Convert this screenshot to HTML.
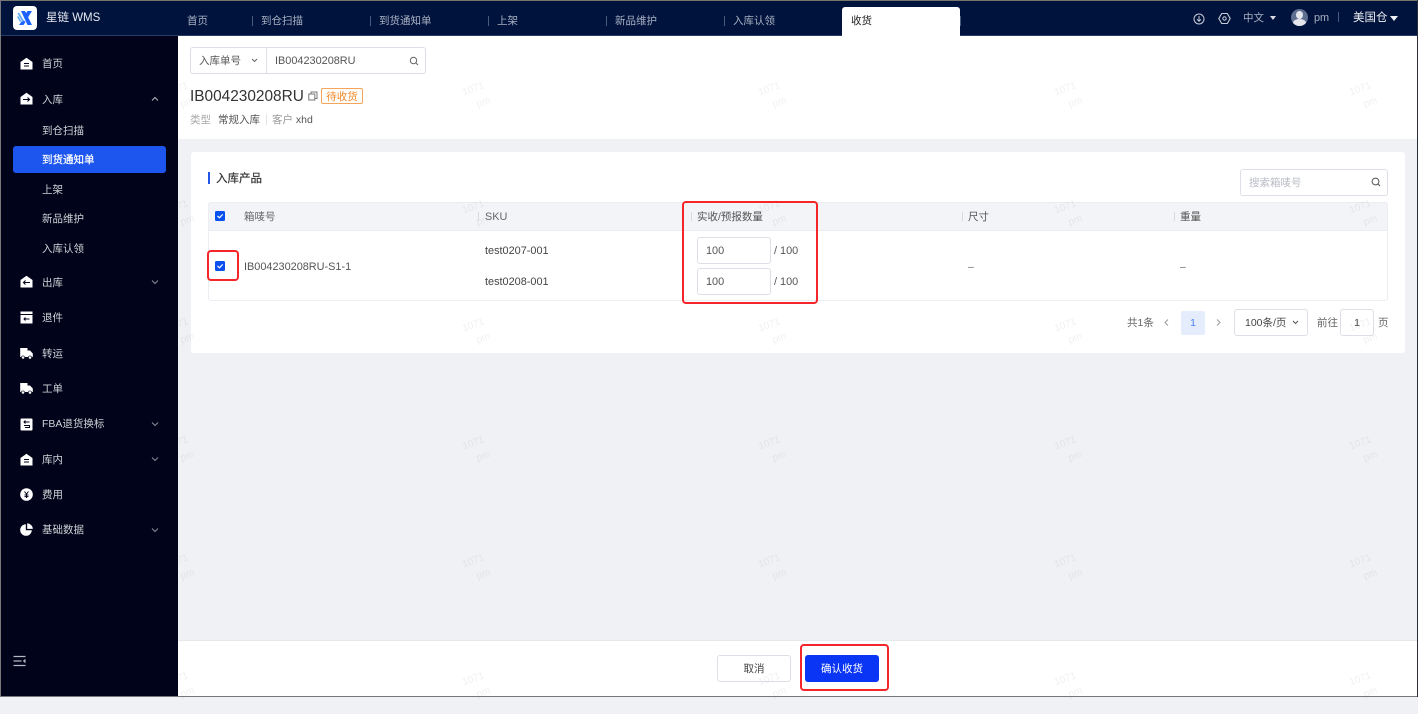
<!DOCTYPE html>
<html lang="zh"><head><meta charset="utf-8"><title>星链 WMS</title>
<style>
*{box-sizing:border-box}
html,body{margin:0;padding:0}
body{width:1418px;height:697px;position:relative;overflow:hidden;background:#f0f1f5;font-family:"Liberation Sans","Noto Sans CJK SC",sans-serif;font-size:10.500px;color:#333;filter:blur(.3px)}
.a{position:absolute;white-space:nowrap;line-height:18px}
.box{position:absolute;background:#fff;border:1px solid #dcdfe6;border-radius:3px}
.top{position:absolute;left:0;top:0;width:1418px;height:36px;background:#00133d;border-bottom:1px solid #2a3c66}
.side{position:absolute;left:0;top:36px;width:178px;height:661px;background:#000319}
.t{color:#a9b1c2;top:12px}
.sep{position:absolute;width:1px;height:10px;top:16px;background:#4a5a7c}
.m{color:#d0d2d8;left:42px;margin-top:1px}
.s{color:#d0d2d8;left:42px;margin-top:1px}
.l{font-size:10.900px}
.r{margin-top:1px}
.ic{position:absolute;left:20px;width:13px;height:13px}
.ch{position:absolute;left:151px;width:8px;height:6px}
.cb{position:absolute;width:10px;height:10px;background:#0a50f0;border-radius:1.500px}
.red{position:absolute;border:2px solid #f5262a;border-radius:4px}
.w{position:absolute;width:40px;height:40px;color:rgba(60,60,70,.08);font-size:10px;line-height:16px;transform:rotate(-20deg)}
.w i{display:block;font-style:normal}
.w i+i{padding-left:9px}
.g{color:#666}
</style></head><body>

<div class="a" style="left:178px;top:36px;width:1240px;height:103px;background:#fff"></div>
<div class="a" style="left:191px;top:152px;width:1214px;height:201px;background:#fff;border-radius:3px"></div>
<div class="a" style="left:178px;top:640px;width:1240px;height:57px;background:#fff;border-top:1px solid #e8e8ec"></div>

<!-- search -->
<div class="box" style="left:190px;top:47px;width:236px;height:27px"></div>
<div class="a" style="left:266px;top:48px;width:1px;height:25px;background:#dcdfe6"></div>
<div class="a" style="left:199px;top:52px;color:#555">入库单号</div>
<svg class="a" style="left:251px;top:58px" width="7" height="5" viewBox="0 0 7 5"><path d="M1 1l2.500 2.500L6 1" fill="none" stroke="#666" stroke-width="1"/></svg>
<div class="a l" style="left:275px;top:52px;color:#555">IB004230208RU</div>
<svg class="a" style="left:409px;top:56px" width="10" height="10" viewBox="0 0 10 10"><circle cx="4.500" cy="4.500" r="3.200" fill="none" stroke="#666" stroke-width="1"/><path d="M7 7l2 2" stroke="#666"/></svg>

<!-- heading -->
<div class="a" style="left:190px;top:88px;font-size:15.400px;line-height:18px;color:#333">IB004230208RU</div>
<svg class="a" style="left:308px;top:91px" width="10" height="10" viewBox="0 0 10 10"><rect x="3" y="1" width="6" height="6.500" fill="none" stroke="#777"/><rect x=".8" y="3" width="6" height="6" fill="#fff" stroke="#777"/></svg>
<div class="a" style="left:321px;top:88px;width:42px;height:16px;border:1px solid #f8a55c;border-radius:2px;color:#f58a2a;text-align:center;line-height:17px">待收货</div>
<div class="a" style="left:190px;top:111px;color:#aaa">类型</div>
<div class="a" style="left:218px;top:111px;color:#555">常规入库</div>
<div class="a" style="left:266px;top:114px;width:1px;height:11px;background:#e5e5e5"></div>
<div class="a" style="left:272px;top:111px;color:#999">客户 <span style="color:#555">xhd</span></div>

<!-- card -->
<div class="a" style="left:208px;top:172px;width:2px;height:12px;background:#2455e6"></div>
<div class="a" style="left:216px;top:170px;font-size:11.500px;color:#333;-webkit-text-stroke:.2px #333">入库产品</div>
<div class="box" style="left:1240px;top:169px;width:148px;height:27px"></div>
<div class="a" style="left:1249px;top:174px;color:#b8bcc4">搜索箱唛号</div>
<svg class="a" style="left:1371px;top:177px" width="10" height="10" viewBox="0 0 10 10"><circle cx="4.500" cy="4.500" r="3.400" fill="none" stroke="#555" stroke-width="1"/><path d="M7 7l2 2" stroke="#555"/></svg>

<!-- table -->
<div class="a" style="left:208px;top:202px;width:1180px;height:99px;border:1px solid #ebedf2;border-radius:3px;background:#fff"></div>
<div class="a" style="left:208px;top:202px;width:1180px;height:29px;background:#f3f4f8;border:1px solid #ebedf2;border-radius:3px 3px 0 0"></div>
<div class="cb" style="left:215px;top:211px"></div>
<svg class="a" style="left:215px;top:211px" width="10" height="10" viewBox="0 0 10 10"><path d="M2.500 5l2 1.800L7.700 3.400" fill="none" stroke="#fff" stroke-width="1.200"/></svg>
<div class="a g" style="left:244px;top:208px">箱唛号</div>
<div class="a" style="left:478px;top:212px;width:1px;height:9px;background:#d8dae0"></div>
<div class="a g l" style="left:485px;top:208px">SKU</div>
<div class="a" style="left:691px;top:212px;width:1px;height:9px;background:#d8dae0"></div>
<div class="a" style="left:697px;top:208px;color:#555">实收/预报数量</div>
<div class="a" style="left:962px;top:212px;width:1px;height:9px;background:#d8dae0"></div>
<div class="a" style="left:968px;top:208px;color:#555">尺寸</div>
<div class="a" style="left:1174px;top:212px;width:1px;height:9px;background:#d8dae0"></div>
<div class="a" style="left:1180px;top:208px;color:#555">重量</div>

<div class="cb" style="left:215px;top:261px"></div>
<svg class="a" style="left:215px;top:261px" width="10" height="10" viewBox="0 0 10 10"><path d="M2.500 5l2 1.800L7.700 3.400" fill="none" stroke="#fff" stroke-width="1.200"/></svg>
<div class="a l r" style="left:244px;top:257px;color:#555">IB004230208RU-S1-1</div>
<div class="a l r" style="left:485px;top:241px;color:#444">test0207-001</div>
<div class="a l r" style="left:485px;top:272px;color:#444">test0208-001</div>
<div class="box" style="left:697px;top:237px;width:74px;height:27px"></div>
<div class="a l r" style="left:706px;top:241px;color:#555">100</div>
<div class="a l r" style="left:774px;top:241px;color:#555">/ 100</div>
<div class="box" style="left:697px;top:268px;width:74px;height:27px"></div>
<div class="a l r" style="left:706px;top:272px;color:#555">100</div>
<div class="a l r" style="left:774px;top:272px;color:#555">/ 100</div>
<div class="a r" style="left:968px;top:257px;color:#666">–</div>
<div class="a r" style="left:1180px;top:257px;color:#666">–</div>

<!-- pagination -->
<div class="a" style="left:1127px;top:314px;color:#666">共1条</div>
<svg class="a" style="left:1164px;top:319px" width="5" height="7" viewBox="0 0 5 7"><path d="M4 .5L1 3.500 4 6.500" fill="none" stroke="#999"/></svg>
<div class="a" style="left:1181px;top:311px;width:24px;height:24px;background:#e5edfc;border-radius:2px;color:#4a80ee;text-align:center;line-height:25px">1</div>
<svg class="a" style="left:1216px;top:319px" width="5" height="7" viewBox="0 0 5 7"><path d="M1 .5l3 3-3 3" fill="none" stroke="#999"/></svg>
<div class="box" style="left:1234px;top:309px;width:74px;height:27px"></div>
<div class="a" style="left:1245px;top:314px;color:#444">100条/页</div>
<svg class="a" style="left:1292px;top:320px" width="7" height="5" viewBox="0 0 7 5"><path d="M1 1l2.500 2.500L6 1" fill="none" stroke="#555"/></svg>
<div class="a" style="left:1317px;top:314px;color:#666">前往</div>
<div class="box" style="left:1340px;top:309px;width:34px;height:27px;text-align:center;line-height:27px;color:#444">1</div>
<div class="a" style="left:1378px;top:314px;color:#666">页</div>

<!-- footer -->
<div class="box" style="left:717px;top:655px;width:74px;height:27px;text-align:center;line-height:27px;color:#444">取消</div>
<div class="a" style="left:805px;top:655px;width:74px;height:27px;background:#0a35f5;border-radius:3px;color:#fff;text-align:center;line-height:29px">确认收货</div>

<!-- watermarks -->
<div class="w" style="left:170px;top:78px"><i>1071</i><i>pm</i></div><div class="w" style="left:466px;top:78px"><i>1071</i><i>pm</i></div><div class="w" style="left:762px;top:78px"><i>1071</i><i>pm</i></div><div class="w" style="left:1058px;top:78px"><i>1071</i><i>pm</i></div><div class="w" style="left:1353px;top:78px"><i>1071</i><i>pm</i></div>
<div class="w" style="left:170px;top:196px"><i>1071</i><i>pm</i></div><div class="w" style="left:466px;top:196px"><i>1071</i><i>pm</i></div><div class="w" style="left:762px;top:196px"><i>1071</i><i>pm</i></div><div class="w" style="left:1058px;top:196px"><i>1071</i><i>pm</i></div><div class="w" style="left:1353px;top:196px"><i>1071</i><i>pm</i></div>
<div class="w" style="left:170px;top:314px"><i>1071</i><i>pm</i></div><div class="w" style="left:466px;top:314px"><i>1071</i><i>pm</i></div><div class="w" style="left:762px;top:314px"><i>1071</i><i>pm</i></div><div class="w" style="left:1058px;top:314px"><i>1071</i><i>pm</i></div><div class="w" style="left:1353px;top:314px"><i>1071</i><i>pm</i></div>
<div class="w" style="left:170px;top:432px"><i>1071</i><i>pm</i></div><div class="w" style="left:466px;top:432px"><i>1071</i><i>pm</i></div><div class="w" style="left:762px;top:432px"><i>1071</i><i>pm</i></div><div class="w" style="left:1058px;top:432px"><i>1071</i><i>pm</i></div><div class="w" style="left:1353px;top:432px"><i>1071</i><i>pm</i></div>
<div class="w" style="left:170px;top:550px"><i>1071</i><i>pm</i></div><div class="w" style="left:466px;top:550px"><i>1071</i><i>pm</i></div><div class="w" style="left:762px;top:550px"><i>1071</i><i>pm</i></div><div class="w" style="left:1058px;top:550px"><i>1071</i><i>pm</i></div><div class="w" style="left:1353px;top:550px"><i>1071</i><i>pm</i></div>
<div class="w" style="left:170px;top:668px"><i>1071</i><i>pm</i></div><div class="w" style="left:466px;top:668px"><i>1071</i><i>pm</i></div><div class="w" style="left:762px;top:668px"><i>1071</i><i>pm</i></div><div class="w" style="left:1058px;top:668px"><i>1071</i><i>pm</i></div><div class="w" style="left:1353px;top:668px"><i>1071</i><i>pm</i></div>

<!-- sidebar -->
<div class="side">
<div class="a" style="left:13px;top:110px;width:153px;height:27px;background:#1c56ee;border-radius:3px"></div>
<svg class="ic" style="top:21px" viewBox="0 0 13 13"><path d="M.5 5L6.500.7 12.500 5v7.500H.5z" fill="#fff"/><path d="M4 6.500h5M4 9h5" stroke="#000319" stroke-width="1.100"/></svg>
<div class="a m" style="top:18px">首页</div>
<svg class="ic" style="top:56px" viewBox="0 0 13 13"><path d="M.5 5L6.500.7 12.500 5v7.500H.5z" fill="#fff"/><path d="M3 7.500h6.500M7.500 5.500l2 2-2 2" stroke="#000319" stroke-width="1.100" fill="none"/></svg>
<div class="a m" style="top:54px">入库</div>
<svg class="ch" style="top:60px" viewBox="0 0 8 6"><path d="M1 4.500L4 1.500l3 3" fill="none" stroke="#b8bac2"/></svg>
<div class="a s" style="top:85px">到仓扫描</div>
<div class="a" style="left:42px;top:115px;color:#fff;-webkit-text-stroke:.2px #fff">到货通知单</div>
<div class="a s" style="top:144px">上架</div>
<div class="a s" style="top:173px">新品维护</div>
<div class="a s" style="top:203px">入库认领</div>
<svg class="ic" style="top:239px" viewBox="0 0 13 13"><path d="M.5 5L6.500.7 12.500 5v7.500H.5z" fill="#fff"/><path d="M10 7.500H3.500M5.500 5.500l-2 2 2 2" stroke="#000319" stroke-width="1.100" fill="none"/></svg>
<div class="a m" style="top:237px">出库</div>
<svg class="ch" style="top:243px" viewBox="0 0 8 6"><path d="M1 1.500l3 3 3-3" fill="none" stroke="#8a8c96"/></svg>
<svg class="ic" style="top:275px" viewBox="0 0 13 13"><rect x=".5" y=".5" width="12" height="2.500" fill="#fff"/><rect x=".5" y="4" width="12" height="8.500" fill="#fff"/><path d="M9.500 8H4M5.500 6.500L4 8l1.500 1.500" stroke="#000319" fill="none"/></svg>
<div class="a m" style="top:272px">退件</div>
<svg class="ic" style="top:311px" viewBox="0 0 13 13"><path d="M.2 1h7.300v2.500H10L12.800 6.500V10H.2z" fill="#fff"/><circle cx="3" cy="10.500" r="1.600" fill="#fff" stroke="#000319" stroke-width=".6"/><circle cx="10" cy="10.500" r="1.600" fill="#fff" stroke="#000319" stroke-width=".6"/></svg>
<div class="a m" style="top:308px">转运</div>
<svg class="ic" style="top:346px" viewBox="0 0 13 13"><path d="M.2 1h7.300v2.500H10L12.800 6.500V10H.2z" fill="#fff"/><circle cx="3" cy="10.500" r="1.600" fill="#fff" stroke="#000319" stroke-width=".6"/><circle cx="10" cy="10.500" r="1.600" fill="#fff" stroke="#000319" stroke-width=".6"/></svg>
<div class="a m" style="top:343px">工单</div>
<svg class="ic" style="top:382px" viewBox="0 0 13 13"><rect x=".5" y=".5" width="12" height="12" rx="1" fill="#fff"/><path d="M9.500 4H4M5.500 2.500L4 4l1.500 1.500M4 7.500h5.500v2H5" stroke="#000319" fill="none"/></svg>
<div class="a m" style="top:378px">FBA退货换标</div>
<svg class="ch" style="top:385px" viewBox="0 0 8 6"><path d="M1 1.500l3 3 3-3" fill="none" stroke="#8a8c96"/></svg>
<svg class="ic" style="top:417px" viewBox="0 0 13 13"><path d="M.5 5L6.500.7 12.500 5v7.500H.5z" fill="#fff"/><path d="M4 6.500h5M4 9h5" stroke="#000319" stroke-width="1.100"/></svg>
<div class="a m" style="top:414px">库内</div>
<svg class="ch" style="top:420px" viewBox="0 0 8 6"><path d="M1 1.500l3 3 3-3" fill="none" stroke="#8a8c96"/></svg>
<svg class="ic" style="top:452px" viewBox="0 0 13 13"><circle cx="6.500" cy="6.500" r="6.300" fill="#fff"/><path d="M4.500 3.500l2 2.500 2-2.500M6.500 6v4M4.500 7h4M4.500 8.600h4" stroke="#000319" fill="none"/></svg>
<div class="a m" style="top:449px">费用</div>
<svg class="ic" style="top:487px" viewBox="0 0 13 13"><path d="M5.800 1.200A5.800 5.800 0 1 0 11.800 7.200H5.800z" fill="#fff"/><path d="M7.200 0.300A5.800 5.800 0 0 1 12.800 5.900H7.200z" fill="#fff"/></svg>
<div class="a m" style="top:484px">基础数据</div>
<svg class="ch" style="top:491px" viewBox="0 0 8 6"><path d="M1 1.500l3 3 3-3" fill="none" stroke="#8a8c96"/></svg>
<svg class="a" style="left:13px;top:619px" width="13" height="12" viewBox="0 0 13 12"><path d="M.5 1.500h12M.5 10.500h12M.5 6h8" stroke="#b4b8c4" stroke-width="1.200"/><path d="M12.500 3.800v4.400L9.800 6z" fill="#b4b8c4"/></svg>
</div>

<!-- topbar -->
<div class="top"></div>
<div class="a" style="left:13px;top:6px;width:24px;height:24px;background:#fff;border-radius:4px"></div>
<svg class="a" style="left:13px;top:6px" width="24" height="24" viewBox="0 0 24 24"><path d="M8 5h4l7 14h-4.500z" fill="#1d62ff"/><path d="M19 5h-4.500l-3 4.500 2.200 4zM10 13.500L6 19h4.500l2-3z" fill="#1d62ff"/><path d="M4.500 7.500l1.500-1 5 8.500-1.500 1zM4 11l1.300-1 3 5-1.300 1z" fill="#62aaf8"/></svg>
<div class="a" style="left:46px;top:9px;font-size:11.500px;color:#e6e8ee">星链 WMS</div>

<div class="a t" style="left:187px">首页</div>
<div class="sep" style="left:252px"></div>
<div class="a t" style="left:261px">到仓扫描</div>
<div class="sep" style="left:370px"></div>
<div class="a t" style="left:379px">到货通知单</div>
<div class="sep" style="left:488px"></div>
<div class="a t" style="left:497px">上架</div>
<div class="sep" style="left:606px"></div>
<div class="a t" style="left:615px">新品维护</div>
<div class="sep" style="left:724px"></div>
<div class="a t" style="left:733px">入库认领</div>
<div class="a" style="left:842px;top:7px;width:118px;height:30px;background:#fff;border-radius:3px 3px 0 0"></div>
<div class="a" style="left:851px;top:12px;color:#222">收货</div>
<div class="sep" style="left:960px"></div>

<svg class="a" style="left:1193px;top:13px" width="12" height="12" viewBox="0 0 12 12"><circle cx="6" cy="6" r="5" fill="none" stroke="#c8ccd6"/><path d="M6 3v5M4 6.300L6 8.300l2-2" stroke="#c8ccd6" fill="none"/></svg>
<svg class="a" style="left:1218px;top:12px" width="13" height="13" viewBox="0 0 13 13"><path d="M3.700 1.500h5.600l2.900 5-2.900 5H3.700L.8 6.500z" fill="none" stroke="#c8ccd6" stroke-width="1.100"/><circle cx="6.500" cy="6.500" r="1.700" fill="none" stroke="#c8ccd6"/></svg>
<div class="a" style="left:1243px;top:9px;color:#a9b1c2">中文</div>
<div class="a" style="left:1270px;top:16px;width:0;height:0;border:3.500px solid transparent;border-top:4px solid #d8dbe2;border-bottom:0"></div>
<div class="a" style="left:1291px;top:9px;width:17px;height:17px;border-radius:50%;background:#5e6f90;overflow:hidden"><div class="a" style="left:5px;top:2px;width:7px;height:8px;border-radius:50%;background:#e4e6ec"></div><div class="a" style="left:2px;top:10px;width:13px;height:8px;border-radius:50%;background:#e4e6ec"></div></div>
<div class="a l" style="left:1314px;top:9px;color:#a9b1c2">pm</div>
<div class="a" style="left:1338px;top:12px;width:1px;height:10px;background:#4a5a7c"></div>
<div class="a" style="left:1353px;top:9px;font-size:11.500px;color:#f0f1f5">美国仓</div>
<div class="a" style="left:1390px;top:16px;width:0;height:0;border:4px solid transparent;border-top:5px solid #f0f1f5;border-bottom:0"></div>

<!-- red annotations -->
<div class="red" style="left:207px;top:250px;width:32px;height:31px"></div>
<div class="red" style="left:682px;top:201px;width:136px;height:103px"></div>
<div class="red" style="left:800px;top:644px;width:89px;height:47px"></div>

<!-- screenshot frame edges -->
<div class="a" style="left:0;top:0;width:1418px;height:1px;background:#77756c"></div>
<div class="a" style="left:0;top:0;width:1px;height:697px;background:#77777c"></div>
<div class="a" style="left:0;top:696px;width:1418px;height:1px;background:#77777a"></div>
<div class="a" style="left:1417px;top:0;width:1px;height:697px;background:#2a2e3a"></div>
</body></html>
